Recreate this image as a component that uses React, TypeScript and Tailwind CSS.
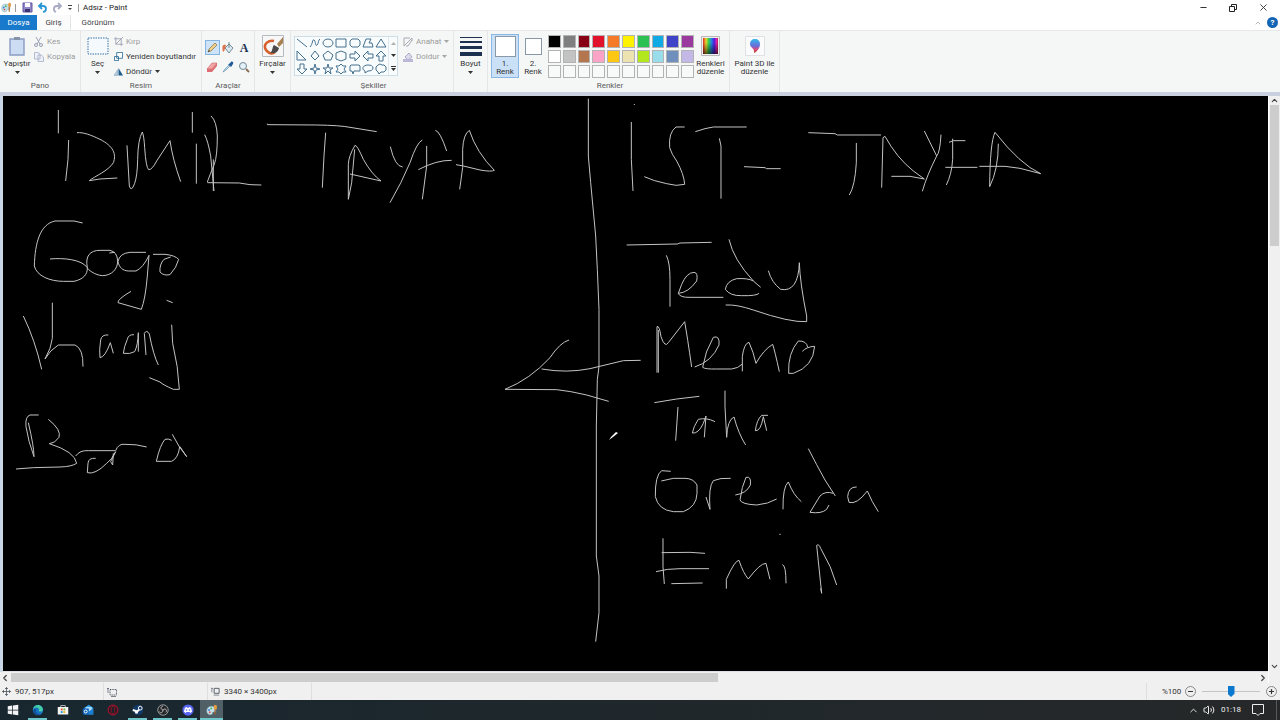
import { useState } from 'react';
import type { ReactNode } from 'react';
import { ChevronDown, ChevronLeft, ChevronRight, ChevronUp, Minus, Plus, Volume2, X } from 'lucide-react';

const PALETTE = [
  '#000000', '#7f7f7f', '#880015', '#e0122c', '#f47a28', '#fff200', '#2dc153', '#0fa9e4', '#3f43c8', '#9a3a9f',
  '#ffffff', '#c3c3c3', '#b3764f', '#fba3c6', '#fcc813', '#ece3b0', '#b2e61d', '#99dcea', '#6f90bd', '#c4b8e6',
  '', '', '', '', '', '', '', '', '', '',
];

const SHAPES = [
  { name: 'Çizgi', d: 'M1 2L11 10' },
  { name: 'Eğri', d: 'M1 10C4 7 3 2 5 3S6 10 8 8S9 3 11 2' },
  { name: 'Oval', d: 'M6 2C9 2 11 4 11 6S9 10 6 10S1 8 1 6S3 2 6 2Z' },
  { name: 'Dikdörtgen', d: 'M1 2H11V10H1Z' },
  { name: 'Yuvarlatılmış dikdörtgen', d: 'M3 2H9L11 4V8L9 10H3L1 8V4Z' },
  { name: 'Çokgen', d: 'M1 10L4 2H9L7 6H10L11 10Z' },
  { name: 'Üçgen', d: 'M6 2L11 10H1Z' },
  { name: 'Dik üçgen', d: 'M1 1L10 10H1Z' },
  { name: 'Baklava', d: 'M6 1L10 6L6 10L2 6Z' },
  { name: 'Beşgen', d: 'M6 1L11 5L9 10H3L1 5Z' },
  { name: 'Altıgen', d: 'M6 1L11 3V9L6 11L1 9V3Z' },
  { name: 'Sağ ok', d: 'M1 4H6V1L11 6L6 11V8H1Z' },
  { name: 'Sol ok', d: 'M11 4H6V1L1 6L6 11V8H11Z' },
  { name: 'Yukarı ok', d: 'M4 11V6H1L6 1L11 6H8V11Z' },
  { name: 'Aşağı ok', d: 'M4 1V6H1L6 11L11 6H8V1Z' },
  { name: 'Dört köşeli yıldız', d: 'M6 1L7 5L11 6L7 7L6 11L5 7L1 6L5 5Z' },
  { name: 'Beş köşeli yıldız', d: 'M6 1L7 5H11L8 7L9 11L6 8L3 11L4 7L1 5H5Z' },
  { name: 'Altı köşeli yıldız', d: 'M6 1L8 3H11L9 6L11 9H8L6 11L4 9H1L3 6L1 3H4Z' },
  { name: 'Dikdörtgen açıklama', d: 'M2 2H10L11 3V8H5L4 11L3 8H1V3Z' },
  { name: 'Oval açıklama', d: 'M6 2C9 2 11 3 11 5S9 8 6 8L3 10V8C-1 6 1 2 6 2Z' },
  { name: 'Bulut açıklama', d: 'M3 2L5 1L7 2L9 2L11 4V7L9 9H6L4 11L3 9L1 7V4Z' },
];

// pencil strokes, three units to a screen pixel
const SKETCH = [
  {
    origin: 'translate(-3 0)',
    strokes: [
      'M175 42V112M206 132L204 190L197 255',
      'M231 110C250 108 275 118 300 130C340 150 350 175 340 200C325 225 285 240 268 254L300 249L352 246',
      'M381 148L388 270Q394 290 404 262Q412 240 413 190Q414 130 427 108Q432 120 434 155Q438 215 446 221Q456 222 470 195L510 134Q518 190 542 257',
      'M577 48V110M589 143V263',
      'M633 60Q650 75 652 120Q652 180 643 205Q630 235 622 258M614 116Q624 135 632 180L642 285M640 190V285M622 260L718 261L750 266L784 267',
      'M248 381L222 375H165C120 385 105 440 103 510C110 540 150 556 190 556H222C250 550 263 535 262 515C245 490 190 485 150 489',
      'M262 515C255 480 270 463 300 463H330Q352 468 353 495C353 520 335 538 308 539C285 538 262 520 262 515M328 471L345 469',
      'M438 469H390Q358 472 354 497C358 515 368 524 385 525H408Q430 515 447 478L442 540Q436 610 424 640L354 620Q352 610 393 586',
      'M459 475H495Q525 478 536 490Q530 515 510 536Q490 540 480 528Q478 505 492 490L512 483M500 613L518 620',
    ],
  },
  {
    origin: 'translate(247 0)',
    strokes: [
      'M52 83V86L200 87Q270 88 300 94L380 107M227 110L222 180L217 275',
      'M315 148Q296 180 295 205V310L305 260L314 160M315 148Q322 148 340 190Q365 235 393 255L300 234',
      'M421 152Q435 212 458 213M517 132Q500 140 480 200Q455 260 420 320',
      'M530 150V210L517 310M505 221Q560 192 605 193M556 103Q570 105 590 165',
      'M658 103Q640 115 638 160V215L629 280M658 103Q680 170 733 223Q725 228 690 222L640 210L618 206',
      'M1015 8V180L1022 260L1037 420L1042 520L1047 640V812L1042 850L1039 990V1380L1047 1440V1550L1037 1637',
      'M957 732Q930 740 900 785Q840 850 765 880L920 881Q960 885 1010 897L1076 916',
      'M875 819Q950 832 1020 818L1120 794L1172 793',
    ],
  },
  {
    origin: 'translate(-3 204)',
    strokes: [
      'M70 48Q105 120 125 208M157 8V115L150 145L135 177Q150 150 175 135H225Q250 145 249 200',
      'M325 105Q305 103 302 120Q297 150 300 173Q315 172 331 128L340 160',
      'M402 104Q385 103 382 118Q372 140 370 160Q390 163 404 155Q414 135 415 98V155',
      'M438 165L433 100Q440 88 448 102Q460 165 475 195',
      'M515 74L518 130Q535 200 538 268H520Q490 255 480 246L448 233',
      'M116 345H90Q75 350 78 380Q85 425 102 470Q102 440 85 368',
      'M145 358Q185 390 177 412Q165 430 148 431Q225 455 230 490Q215 500 180 501L100 503L48 507',
      'M227 468Q240 450 265 452H347Q355 430 375 433Q410 432 440 441',
      'M287 475Q265 473 264 490L262 518Q285 525 320 490Q335 480 347 455L332 485L338 495L340 460',
      'M515 421Q505 415 495 418Q480 435 469 484H515Q535 475 539 440M517 403Q535 440 560 470L540 440',
    ],
  },
  {
    origin: 'translate(587 0)',
    strokes: [
      'M133 24V27M124 78V190L129 285',
      'M284 93H258Q235 110 239 155Q245 175 260 195Q282 235 284 265Q260 272 230 263Q190 255 163 242',
      'M316 107L345 98L370 93H470M388 127L393 150V308M462 212L525 215L530 218H572',
      'M655 110L735 113L742 117H873M799 141V200Q795 270 778 297',
      'M875 275L879 125L885 121Q920 185 970 225L1003 249L960 241H904',
      'M1003 105L1040 180Q1050 170 1053 116M1040 180Q1010 240 997 286',
      'M1088 128V190Q1085 235 1069 267M1077 139L1090 134H1126M1066 214H1162',
      'M1168 211H1245L1290 217L1352 233Q1290 205 1215 109Q1200 140 1199 272Q1225 220 1225 143',
      'M110 447L262 444L270 441L365 439M229 478Q240 500 240 550V632',
      'M265 592Q295 590 320 555Q325 530 312 529Q290 530 275 565L265 592Q270 605 300 604H400',
      'M417 430Q430 490 490 555L512 574M490 555Q475 546 440 548Q410 555 406 580Q420 600 455 599Q500 600 507 592',
      'M535 524Q545 560 572 580Q625 590 628 500Q630 560 650 660V677Q600 680 490 642Q440 625 407 627',
    ],
  },
  {
    origin: 'translate(587 214)',
    strokes: [
      'M205 188V60M201 188V50Q208 45 213 80Q225 115 235 98L284 35Q292 80 305 171',
      'M314 171Q365 155 387 105Q390 75 370 82Q345 125 338 172Q345 178 380 177H425Q445 175 457 162',
      'M457 184V140Q462 100 477 97Q490 125 498 160Q520 120 548 103Q555 125 568 185',
      'M637 124Q650 110 674 109Q670 170 610 190H596Q593 130 625 93Q650 92 653 112',
      'M193 278L260 267L328 259M264 291L257 392',
      'M375 335Q350 322 325 328Q310 350 307 369Q325 372 340 340L348 318L343 382',
      'M405 242V290L410 382Q412 330 432 321Q445 370 467 405',
      'M534 316H515Q500 330 496 362Q512 365 520 320L530 362',
      'M242 484L215 482Q195 495 196 560Q205 600 250 605H280Q320 590 321 550V525Q310 505 285 505H250L214 513',
      'M348 561L360 598Q355 530 370 512Q390 503 422 505',
      'M436 555Q470 550 481 525Q485 498 468 502Q455 530 450 570Q455 583 500 585Q535 582 560 567',
      'M579 598Q578 530 595 516Q610 555 634 575',
      'M655 416Q680 465 705 510L736 558M730 550Q705 542 690 558L660 607Q695 612 710 598L717 585',
      'M800 531Q775 530 773 560L777 577Q800 585 832 543Q845 575 865 605M568 673H572',
      'M219 685V770L223 822M215 728L300 727L345 730M198 785Q230 776 270 776H357M244 821L338 819',
      'M409 836V808Q435 750 447 751Q460 790 475 807Q510 760 528 760L540 808M577 764Q588 765 588 820',
      'M695 850L680 706Q686 700 692 715Q725 770 740 825M695 850L692 835',
    ],
  },
];

function Caret({ className = 'fill-[#333]' }: { className?: string }) {
  return (
    <svg className={`h-[3px] w-[5px] shrink-0 ${className}`} viewBox="0 0 5 3">
      <path d="M0 0H5L2.5 3Z" />
    </svg>
  );
}

function PaintLogo({ className = '' }: { className?: string }) {
  return (
    <svg className={className} viewBox="0 0 16 16">
      <path d="M7 3C3 3 1 6 1 9C1 13 4 15 7 14C9 14 8 12 9 11S12 12 13 9C13 5 11 3 7 3Z" fill="#c5e2ea" stroke="#7fa5b5" strokeWidth=".8" />
      <circle cx="4" cy="8" r="1.3" fill="#3f86d6" />
      <circle cx="7" cy="6" r="1.3" fill="#47b35a" />
      <circle cx="5" cy="11" r="1.2" fill="#d94a42" />
      <path d="M12 14V7" stroke="#a4632a" strokeWidth="1.6" />
      <path d="M10.5 7V2L12 1L14.5 2V7Z" fill="#e79a3e" />
    </svg>
  );
}

function Group({ label, className = '', children }: { label: string; className?: string; children: ReactNode }) {
  return (
    <section className={`flex shrink-0 flex-col border-r border-[#e4e6e8] pt-[3px] ${className}`}>
      <div className="flex flex-1">{children}</div>
      <h2 className="h-[12px] text-center leading-[12px] text-[#5b5b5b]">{label}</h2>
    </section>
  );
}

function BigButton({ icon, label, arrow = false, className = '' }: { icon: ReactNode; label: string; arrow?: boolean; className?: string }) {
  return (
    <button type="button" className={`flex flex-col items-center pt-0.5 leading-[8px] ${className}`}>
      <span className="mb-1 flex h-[20px] items-center">{icon}</span>
      <span className="whitespace-pre-line">{label}</span>
      {arrow && <Caret className="mt-[3px] fill-[#333]" />}
    </button>
  );
}

function SmallButton({ icon, label, arrow = false, disabled = false }: { icon: ReactNode; label: string; arrow?: boolean; disabled?: boolean }) {
  return (
    <button type="button" disabled={disabled} className="flex h-[15px] items-center gap-[3px] whitespace-nowrap disabled:text-[#9b9b9b]">
      {icon}
      <span>{label}</span>
      {arrow && <Caret className={disabled ? 'fill-[#a5a5a5]' : 'fill-[#333]'} />}
    </button>
  );
}

function TitleBar() {
  return (
    <header className="flex h-[15px] items-center bg-white">
      <PaintLogo className="ml-px size-[11px]" />
      <span className="ml-[3px] h-2 w-px bg-[#9a9a9a]" />
      <button type="button" aria-label="Kaydet" className="ml-[6px]">
        <svg className="size-[11px]" viewBox="0 0 11 11">
          <path d="M1 1H10V10H1Z" fill="#9187c9" stroke="#5f549f" />
          <path d="M3 1H8V5H3Z" fill="#fff" />
          <path d="M3 7H8V10H3Z" fill="#3a3470" />
        </svg>
      </button>
      <button type="button" aria-label="Geri al" className="ml-1">
        <svg className="size-[11px]" viewBox="0 0 11 11" fill="none" stroke="#2997d4" strokeWidth="1.8">
          <path d="M5 1L2 4L5 7M2 4H6C10 4 10 9 6 10" />
        </svg>
      </button>
      <button type="button" aria-label="Yinele" className="ml-1">
        <svg className="size-[11px]" viewBox="0 0 11 11" fill="none" stroke="#a9acc4" strokeWidth="1.8">
          <path d="M6 1L9 4L6 7M9 4H5C1 4 1 9 4 10" />
        </svg>
      </button>
      <button type="button" aria-label="Hızlı erişimi özelleştir" className="ml-1">
        <svg className="h-[6px] w-[6px]" viewBox="0 0 6 6">
          <path d="M1 0H5V1H1ZM1 3H5L3 5Z" fill="#444" />
        </svg>
      </button>
      <span className="ml-[5px] h-2 w-px bg-[#9a9a9a]" />
      <h1 className="ml-1 text-[#222]">Adsız - Paint</h1>
      <div className="ml-auto flex h-full text-[#333]">
        <button type="button" aria-label="Simge durumuna küçült" className="flex w-[30px] items-center justify-center">
          <Minus size={9} strokeWidth={3} />
        </button>
        <button type="button" aria-label="Önceki boyut" className="flex w-[30px] items-center justify-center">
          <svg className="size-[8px]" viewBox="0 0 8 8" fill="none" stroke="#222">
            <path d="M.5 2.5H5.5V7.5H.5ZM2.5 2.5V.5H7.5V5.5H5.5" />
          </svg>
        </button>
        <button type="button" aria-label="Kapat" className="flex w-[30px] items-center justify-center">
          <X size={11} strokeWidth={2} />
        </button>
        <span className="w-[2px]" />
      </div>
    </header>
  );
}

function Tabs() {
  return (
    <nav className="flex h-[15px] items-stretch bg-white text-[#444]">
      <button type="button" className="w-[37px] bg-[#1979ca] text-white">Dosya</button>
      <button type="button" className="w-[34px] border-r border-[#e2e4e6] bg-[#fbfbfc]">Giriş</button>
      <button type="button" className="ml-[9px] w-[36px]">Görünüm</button>
      <div className="ml-auto flex items-center gap-[5px] pr-[2px]">
        <ChevronUp size={8} className="text-[#999]" />
        <button type="button" aria-label="Yardım" className="flex size-[11px] items-center justify-center rounded-full bg-[#1464b4] font-bold text-white">?</button>
      </div>
    </nav>
  );
}

function Tools() {
  const [tool, setTool] = useState('Kalem');
  const tools = [
    {
      name: 'Kalem',
      icon: (
        <>
          <path d="M2 10L3 7L9 1L11 3L5 9Z" fill="#efcf85" stroke="#84704a" strokeWidth=".7" />
          <path d="M2 10L3 8L4 9Z" fill="#333" />
        </>
      ),
    },
    {
      name: 'Renkle doldur',
      icon: (
        <>
          <path d="M3 6L7 2L11 6L7 11Z" fill="#dbe8ef" stroke="#58727f" strokeWidth=".8" />
          <path d="M7 0V6" stroke="#58727f" strokeWidth=".8" />
          <path d="M4 3C0 2 0 5 1 10C3 9 3 6 4 3Z" fill="#e0724b" />
        </>
      ),
    },
    {
      name: 'Metin',
      icon: null,
    },
    {
      name: 'Silgi',
      icon: (
        <>
          <path d="M1 8L6 2H11L6 8Z" fill="#f2a5a5" stroke="#cb6166" strokeWidth=".6" />
          <path d="M1 8H6L11 2V5L6 11H1Z" fill="#dc6d72" />
        </>
      ),
    },
    {
      name: 'Renk seçici',
      icon: (
        <>
          <path d="M1 11L3 8L7 4L8 5L4 9Z" fill="#b9e0f2" stroke="#57829d" strokeWidth=".6" />
          <path d="M6 3L9 6L11 3C12 1 10 0 9 1L7 3Z" fill="#1e5a96" />
        </>
      ),
    },
    {
      name: 'Büyüteç',
      icon: (
        <>
          <circle cx="5" cy="5" r="3.5" fill="#e3f1fa" stroke="#75868f" />
          <path d="M8 8L11 11" stroke="#8b6b50" strokeWidth="1.8" />
        </>
      ),
    },
  ];

  return (
    <div className="mx-auto grid grid-cols-[repeat(3,16px)] content-center">
      {tools.map((t) => (
        <button
          key={t.name}
          type="button"
          aria-label={t.name}
          onClick={() => setTool(t.name)}
          className="flex h-[19px] items-center justify-center"
        >
          <span
            className={`flex size-[15px] items-center justify-center border font-['Liberation_Serif',serif] text-[12px] font-bold text-[#1d3353] ${
              tool === t.name ? 'border-[#86b4e0] bg-[#cde3f8]' : 'border-transparent'
            }`}
          >
            {t.icon ? <svg className="size-[12px] shrink-0" viewBox="0 0 12 12">{t.icon}</svg> : 'A'}
          </span>
        </button>
      ))}
    </div>
  );
}

function Ribbon() {
  const [slot, setSlot] = useState(1);
  const [colors, setColors] = useState(['#ffffff', '#ffffff']);

  const pick = (color: string) => {
    if (!color) return;
    setColors(colors.map((c, i) => (i === slot - 1 ? color : c)));
  };

  return (
    <div className="flex h-[66px] overflow-hidden border-t border-b-4 border-t-[#e6e8ea] border-b-[#c9d1e0] bg-[#f5f7f7] text-[#333]">
      <Group label="Pano" className="w-[81px]">
        <BigButton
          label="Yapıştır"
          arrow
          className="w-[34px]"
          icon={
            <svg className="h-[20px] w-[18px]" viewBox="0 0 18 20">
              <path d="M2 3H16V19H2Z" fill="#cbdcf3" stroke="#8a9cc2" strokeWidth="1.4" />
              <path d="M6 1H12V4H6Z" fill="#8493a8" />
            </svg>
          }
        />
        <div>
          <SmallButton
            disabled
            label="Kes"
            icon={
              <svg className="size-[10px]" viewBox="0 0 10 10" fill="none" stroke="#9aa0b4">
                <path d="M2 0L6 7M7 0L3 7" />
                <circle cx="2" cy="8" r="1.5" />
                <circle cx="7" cy="8" r="1.5" />
              </svg>
            }
          />
          <SmallButton
            disabled
            label="Kopyala"
            icon={
              <svg className="size-[10px]" viewBox="0 0 10 10" fill="#edf0f8" stroke="#a6adc6" strokeWidth=".8">
                <path d="M.5.5H4L6 2V7H.5ZM4 3H7L9.5 5V9.5H4Z" />
              </svg>
            }
          />
        </div>
      </Group>

      <Group label="Resim" className="w-[121px]">
        <BigButton
          label="Seç"
          arrow
          className="w-[33px]"
          icon={
            <svg className="h-[18px] w-[22px]" viewBox="0 0 22 18">
              <path d="M1 1H21V17H1Z" fill="#f4f9fe" stroke="#3c74a8" strokeDasharray="1.5 1" />
            </svg>
          }
        />
        <div>
          <SmallButton
            disabled
            label="Kırp"
            icon={
              <svg className="size-[9px]" viewBox="0 0 10 10" fill="none" stroke="#9ea4b2">
                <path d="M2 0V8H10M0 2H8V10M2 8L10 0" />
              </svg>
            }
          />
          <SmallButton
            label="Yeniden boyutlandır"
            icon={
              <svg className="size-[9px]" viewBox="0 0 10 10" fill="#fff" stroke="#35749c">
                <path d="M3 .5H9.5V7H3ZM.5 5H5V9.5H.5Z" />
              </svg>
            }
          />
          <SmallButton
            label="Döndür"
            arrow
            icon={
              <svg className="size-[9px]" viewBox="0 0 10 10">
                <path d="M0 9.5H4V3Z" fill="#b4cde2" stroke="#7d9fba" strokeWidth=".6" />
                <path d="M5 9.5V1L10 9.5Z" fill="#1e5c8c" />
              </svg>
            }
          />
        </div>
      </Group>

      <Group label="Araçlar" className="w-[53px]">
        <Tools />
      </Group>

      <Group label="" className="w-[36px]">
        <BigButton
          label="Fırçalar"
          arrow
          className="w-full"
          icon={
            <svg className="size-[22px]" viewBox="0 0 22 22">
              <path d="M.5.5H21.5V21.5H.5Z" fill="#f7f7f8" stroke="#b4bac0" />
              <path d="M12 6C6 5 2 9 3 13C5 18 10 20 13 17" fill="none" stroke="#d75f2c" strokeWidth="2.5" />
              <path d="M21 2L15 9L17 12L21 8Z" fill="#a98050" />
              <path d="M12 10L17 13C16 18 11 19 8 18C11 16 10 12 12 10Z" fill="#4a4848" />
            </svg>
          }
        />
      </Group>

      <Group label="Şekiller" className="w-[163px] pl-[3px]">
        <div className="mt-[2px] flex h-[40px] w-[104px] border border-[#cfdde6] bg-[#f9fcfd]">
          <div className="grid flex-1 grid-cols-7">
            {SHAPES.map((s) => (
              <button key={s.name} type="button" aria-label={s.name} className="flex items-center justify-center">
                <svg className="size-[12px] shrink-0" viewBox="0 0 12 12" fill="none" stroke="#44708f">
                  <path d={s.d} />
                </svg>
              </button>
            ))}
          </div>
          <div className="flex w-[9px] flex-col items-center justify-around border-l border-[#dfe8ee]">
            <Caret className="rotate-180 fill-[#b0b0b0]" />
            <Caret />
            <svg className="h-[5px] w-[5px]" viewBox="0 0 5 5">
              <path d="M0 0H5V1H0ZM0 2H5L2.5 5Z" fill="#333" />
            </svg>
          </div>
        </div>
        <div className="ml-[5px]">
          <SmallButton
            disabled
            arrow
            label="Anahat"
            icon={
              <svg className="size-[10px]" viewBox="0 0 10 10" fill="none" stroke="#a7a9b0">
                <path d="M7 1H1V9L9 1V4M3 9H5L9 3" />
              </svg>
            }
          />
          <SmallButton
            disabled
            arrow
            label="Doldur"
            icon={
              <svg className="size-[10px]" viewBox="0 0 10 10">
                <path d="M2 5L6 1L9 5L5 8Z" fill="#dcdcec" stroke="#9c9cbc" strokeWidth=".8" />
                <path d="M0 7H10V10H0Z" fill="#b9b8d6" />
              </svg>
            }
          />
        </div>
      </Group>

      <Group label="" className="w-[34px]">
        <BigButton
          label="Boyut"
          arrow
          className="w-full"
          icon={
            <svg className="h-[19px] w-[22px]" viewBox="0 0 22 19" fill="#1e3050">
              <path d="M0 0H22V1H0ZM0 4H22V6H0ZM0 9H22V12H0ZM0 15H22V19H0Z" />
            </svg>
          }
        />
      </Group>

      <Group label="Renkler" className="w-[242px] pl-[3px]">
        {[1, 2].map((n) => (
          <button
            key={n}
            type="button"
            onClick={() => setSlot(n)}
            className={`flex h-[44px] w-[28px] flex-col items-center border pt-px leading-[8px] whitespace-pre-line ${
              slot === n ? 'border-[#8ab8e4] bg-[#cae0f7]' : 'border-transparent'
            }`}
          >
            <span className="mb-[3px] flex h-[21px] items-center">
              <span
                className={`block border border-[#8a98a5] ${n === 1 ? 'size-[21px]' : 'size-[17px]'}`}
                style={{ backgroundColor: colors[n - 1] }}
              />
            </span>
            {`${n}.\nRenk`}
          </button>
        ))}
        <div className="mt-px ml-px grid h-[43px] w-[146px] grid-cols-10 gap-[2px]">
          {PALETTE.map((color, i) => (
            <button
              key={i}
              type="button"
              aria-label={color || 'Boş renk'}
              onClick={() => pick(color)}
              className="border border-[#b3b3b3] bg-[#f8f9f9]"
            >
              <span className="block size-full" style={{ backgroundColor: color || 'transparent' }} />
            </button>
          ))}
        </div>
        <BigButton
          label={'Renkleri\ndüzenle'}
          className="w-[33px]"
          icon={
            <svg className="h-[20px] w-[19px]" viewBox="0 0 19 20">
              <defs>
                <linearGradient id="spectrum">
                  <stop offset="0" stopColor="#e02424" />
                  <stop offset=".2" stopColor="#e8d52a" />
                  <stop offset=".38" stopColor="#2fd04e" />
                  <stop offset=".58" stopColor="#2779e8" />
                  <stop offset=".75" stopColor="#4b1ed6" />
                  <stop offset=".88" stopColor="#d321c7" />
                  <stop offset="1" stopColor="#d02040" />
                </linearGradient>
                <linearGradient id="shade" x2="0" y2="1">
                  <stop offset=".3" stopColor="#000" stopOpacity="0" />
                  <stop offset="1" stopColor="#000" stopOpacity=".6" />
                </linearGradient>
              </defs>
              <path d="M.5.5H18.5V19.5H.5Z" fill="#eee" stroke="#b9b9b9" />
              <path d="M2 2H17V18H2Z" fill="url(#spectrum)" />
              <path d="M2 2H17V18H2Z" fill="url(#shade)" />
            </svg>
          }
        />
      </Group>

      <Group label="" className="w-[50px]">
        <BigButton
          label={'Paint 3D ile\ndüzenle'}
          className="w-full"
          icon={
            <svg className="size-[20px]" viewBox="0 0 20 20">
              <defs>
                <linearGradient id="drop" x2="0" y2="1">
                  <stop offset="0" stopColor="#35b8ec" />
                  <stop offset=".5" stopColor="#6a6ed8" />
                  <stop offset=".75" stopColor="#e04a7a" />
                  <stop offset="1" stopColor="#a83a22" />
                </linearGradient>
              </defs>
              <path d="M.5.5H19.5V19.5H.5Z" fill="#fbfbfc" stroke="#dfe1e4" />
              <path d="M10 3C7 3 5 5 5 8C5 12 10 12 9 17C13 15 15 11 15 8C15 5 13 3 10 3Z" fill="url(#drop)" />
            </svg>
          }
        />
      </Group>
    </div>
  );
}

function Canvas() {
  return (
    <main className="flex min-h-0 flex-1 bg-[#f0f0f0]">
      <div className="flex min-w-0 flex-1 flex-col">
        <div className="min-h-0 flex-1 border-b border-l-[3px] border-b-[#dcdfe6] border-l-[#c9d6e6] bg-black">
          <svg className="size-full" fill="none" stroke="#c4c4c4" strokeWidth="3" strokeLinejoin="round" role="img" aria-label="Tuval">
            {SKETCH.map((part) => (
              <g key={part.origin} transform={part.origin}>
                <g transform="scale(0.33333)">
                  {part.strokes.map((d) => (
                    <path key={d} d={d} />
                  ))}
                </g>
              </g>
            ))}
            <path d="M606 344L608 341L613 336L615 337L610 341Z" fill="#fff" stroke="none" />
          </svg>
        </div>
        <div className="flex h-[11px] items-center bg-[#f0f0f0] text-[#444]">
          <ChevronLeft size={10} strokeWidth={3} className="mr-px shrink-0" />
          <div className="h-[9px] w-[707px] min-w-0 bg-[#cdcdcd]" />
          <ChevronRight size={10} strokeWidth={3} className="ml-auto shrink-0" />
        </div>
      </div>
      <div className="flex w-[12px] flex-col items-center border-l border-white text-[#444]">
        <ChevronUp size={9} strokeWidth={3} className="shrink-0" />
        <div className="h-[141px] min-h-0 w-[9px] bg-[#cdcdcd]" />
        <ChevronDown size={9} strokeWidth={3} className="mt-auto mb-[12px] shrink-0" />
      </div>
    </main>
  );
}

function StatusBar() {
  const [zoom, setZoom] = useState(100);
  return (
    <footer className="flex h-[17px] items-stretch bg-[#f0f0f0] text-[#333]">
      <div className="flex w-[104px] items-center gap-1 border-r border-[#dedede] pl-[2px]">
        <svg className="size-[9px]" viewBox="0 0 9 9" stroke="#4c5560" fill="none">
          <path d="M4.5 0V9M0 4.5H9M3 1.5H6M3 7.5H6M1.5 3V6M7.5 3V6" strokeWidth=".8" />
        </svg>
        907, 517px
      </div>
      <div className="flex w-[104px] items-center border-r border-[#dedede] pl-[3px]">
        <svg className="size-[10px]" viewBox="0 0 10 10" stroke="#4c5560" fill="none">
          <path d="M3 2.5H9.5V8H3Z" strokeDasharray="1 .7" />
          <path d="M1 1V6M0 2L1 1L2 2M4 9.5H9" strokeWidth=".7" />
        </svg>
      </div>
      <div className="flex w-[104px] items-center gap-1 border-r border-[#dedede] pl-[3px]">
        <svg className="size-[9px]" viewBox="0 0 10 10" stroke="#4c5560" fill="none">
          <path d="M3.5 1.5H9V7H3.5Z" />
          <path d="M1 1V6M0 2L1 1L2 2M3 9H9" strokeWidth=".7" />
        </svg>
        3340 × 3400px
      </div>
      <div className="ml-auto flex items-center border-l border-[#dedede] pr-[3px] pl-[15px]">
        <span className="w-[23px]">%{zoom}</span>
        <button
          type="button"
          aria-label="Uzaklaştır"
          onClick={() => setZoom(Math.max(zoom - 10, 10))}
          className="flex size-[11px] items-center justify-center rounded-full border border-[#888]"
        >
          <Minus size={7} strokeWidth={4} />
        </button>
        <input
          type="range"
          aria-label="Yakınlaştırma"
          min={10}
          max={190}
          value={zoom}
          onChange={(e) => setZoom(Number(e.target.value))}
          className="mx-[6px] h-px w-[58px] appearance-none bg-[#c4c4c4] [&::-webkit-slider-thumb]:h-[11px] [&::-webkit-slider-thumb]:w-[7px] [&::-webkit-slider-thumb]:appearance-none [&::-webkit-slider-thumb]:bg-[#0b78d0] [&::-webkit-slider-thumb]:[clip-path:polygon(0_0,100%_0,100%_70%,50%_100%,0_70%)]"
        />
        <button
          type="button"
          aria-label="Yakınlaştır"
          onClick={() => setZoom(Math.min(zoom + 10, 190))}
          className="flex size-[11px] items-center justify-center rounded-full border border-[#888]"
        >
          <Plus size={7} strokeWidth={4} />
        </button>
      </div>
    </footer>
  );
}

function Taskbar() {
  const apps = [
    {
      name: 'Başlat',
      open: false,
      icon: <path d="M1 3L7 2V7.5H1ZM8 2L15 1V7.5H8ZM1 8.5H7V14L1 13ZM8 8.5H15V15L8 14Z" fill="#f2f4f5" />,
    },
    {
      name: 'Edge',
      open: true,
      icon: (
        <>
          <circle cx="8" cy="8" r="7" fill="#1774c4" />
          <path d="M1 8C2 1 9 0 12 3C16 6 15 11 10 10C8 9 10 8 9 6C6 3 2 5 1 8Z" fill="#45cfa3" />
          <path d="M6 7C3 10 6 14 11 13C9 16 3 15 2 11C1 8 3 6 6 7Z" fill="#124b92" />
        </>
      ),
    },
    {
      name: 'Microsoft Store',
      open: false,
      icon: (
        <>
          <path d="M1 4H15V14H1Z" fill="#f4f4f4" />
          <path d="M5 4V2H11V4" fill="none" stroke="#ddd" />
          <path d="M5 6H7.5V8.5H5Z" fill="#e8502c" />
          <path d="M8.5 6H11V8.5H8.5Z" fill="#6fb32b" />
          <path d="M5 9.5H7.5V12H5Z" fill="#1b97da" />
          <path d="M8.5 9.5H11V12H8.5Z" fill="#f1b51c" />
        </>
      ),
    },
    {
      name: 'Outlook',
      open: false,
      icon: (
        <>
          <path d="M3 5L9 1L15 5V14H3Z" fill="#2f9ae6" />
          <path d="M5 4H13V10H5Z" fill="#a9dcf8" />
          <path d="M1 6H9V14H1Z" fill="#0d5fb8" />
          <path d="M9 10L15 6V14H9Z" fill="#1c7ed0" />
          <circle cx="5" cy="10" r="2" fill="none" stroke="#fff" strokeWidth="1.3" />
        </>
      ),
    },
    {
      name: 'Opera GX',
      open: false,
      icon: (
        <>
          <circle cx="8" cy="8" r="6.5" fill="#2b1720" stroke="#a3152f" strokeWidth="1.5" />
          <ellipse cx="8" cy="8" rx="2.6" ry="5" fill="#1d2227" stroke="#a3152f" />
        </>
      ),
    },
    {
      name: 'Steam',
      open: true,
      icon: (
        <>
          <circle cx="8" cy="8" r="7" fill="#123a68" />
          <path d="M1 8L7 10L10 7" stroke="#fff" strokeWidth="2.5" fill="none" />
          <circle cx="11" cy="5.5" r="2.5" fill="#123a68" stroke="#fff" strokeWidth="1.3" />
          <circle cx="6" cy="11" r="2" fill="#fff" />
        </>
      ),
    },
    {
      name: 'OBS',
      open: true,
      icon: (
        <>
          <circle cx="8" cy="8" r="7" fill="#25272a" stroke="#b8babb" />
          <path d="M8 8C4 7 5 3 8 3M8 8C11 5 14 8 12 11M8 8C8 12 4 13 3 10" fill="none" stroke="#b8babb" strokeWidth="1.3" />
        </>
      ),
    },
    {
      name: 'Discord',
      open: true,
      icon: (
        <>
          <circle cx="8" cy="8" r="7.5" fill="#5865f2" />
          <path d="M4 5L6.5 4L7 5H9L9.5 4L12 5L13.5 10L11 12L10 10.5H6L5 12L2.5 10Z" fill="#fff" />
          <circle cx="6" cy="8" r="1.1" fill="#5865f2" />
          <circle cx="10" cy="8" r="1.1" fill="#5865f2" />
        </>
      ),
    },
  ];

  return (
    <div className="flex h-[20px] items-stretch bg-gradient-to-r from-[#18272f] to-[#262829] text-[#eee]">
      {apps.map((app) => (
        <button
          key={app.name}
          type="button"
          aria-label={app.name}
          className={`mx-[3px] flex w-[19px] items-center justify-center border-b-2 pt-0.5 ${app.open ? 'border-[#6fc6cb]' : 'border-transparent'}`}
        >
          <svg className="size-[12px]" viewBox="0 0 16 16">{app.icon}</svg>
        </button>
      ))}
      <button type="button" aria-label="Paint" className="flex w-[23px] items-center justify-center border-b-2 border-[#6fc6cb] bg-[#516067] pt-0.5">
        <PaintLogo className="size-[12px]" />
      </button>
      <div className="ml-auto flex items-center">
        <ChevronUp size={11} />
        <Volume2 size={12} className="ml-[4px]" />
        <time className="ml-[6px]">01:18</time>
        <svg className="ml-[11px] h-[12px] w-[12px]" viewBox="0 0 12 12" fill="none" stroke="#eee">
          <path d="M.5.5H11.5V9.5H8L6 11.5L4 9.5H.5Z" />
        </svg>
        <span className="ml-[12px] h-full w-[4px] border-l border-[#5a5a5a]" />
      </div>
    </div>
  );
}

export default function App() {
  return (
    <div className="flex h-screen flex-col overflow-hidden bg-white font-['Roboto','Noto_Sans',sans-serif] text-[8px] leading-[10px]">
      <TitleBar />
      <Tabs />
      <Ribbon />
      <Canvas />
      <StatusBar />
      <Taskbar />
    </div>
  );
}
